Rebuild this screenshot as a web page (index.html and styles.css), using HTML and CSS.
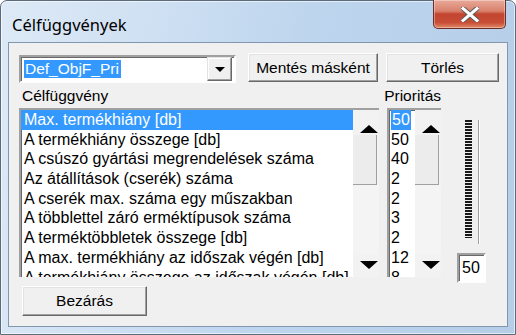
FILE: index.html
```html
<!DOCTYPE html>
<html lang="hu">

<head>
    <meta charset="UTF-8">
    <title>Célfüggvények</title>
    <link rel="stylesheet" href="styles.css">
</head>

<body>
    <div class="window">
        <div class="titlebar">
            <span class="title">Célfüggvények</span>
            <button class="close-btn" type="button" aria-label="Bezárás">
                <svg width="18" height="15" viewBox="0 0 18 15">
                    <path d="M2 1.5 L16 13.5 M16 1.5 L2 13.5" stroke="#5a5a5a" stroke-width="5" stroke-linecap="square" fill="none" />
                    <path d="M2 1.5 L16 13.5 M16 1.5 L2 13.5" stroke="#fff" stroke-width="3" stroke-linecap="square" fill="none" />
                </svg>
            </button>
        </div>

        <div class="client">
            <!-- felso sor: kombo + gombok -->
            <div class="top-row">
                <div class="combo">
                    <span class="combo-text">Def_ObjF_Pri</span>
                    <span class="combo-btn"><span class="tri-down small"></span></span>
                </div>
                <button class="btn btn-save" type="button">Mentés másként</button>
                <button class="btn btn-delete" type="button">Törlés</button>
            </div>

            <div class="label-row">
                <span class="lbl lbl-func">Célfüggvény</span>
                <span class="lbl lbl-prio">Prioritás</span>
            </div>

            <div class="list-row">
                <div class="listbox list-func">
                    <ul class="items">
                        <li class="selected">Max. termékhiány [db]</li>
                        <li>A termékhiány összege [db]</li>
                        <li>A csúszó gyártási megrendelések száma</li>
                        <li>Az átállítások (cserék) száma</li>
                        <li>A cserék max. száma egy műszakban</li>
                        <li>A többlettel záró erméktípusok száma</li>
                        <li>A terméktöbbletek összege [db]</li>
                        <li>A max. termékhiány az időszak végén [db]</li>
                        <li>A termékhiány összege az időszak végén [db]</li>
                    </ul>
                    <div class="scrollbar">
                        <span class="arrow-box"><span class="tri-up"></span></span>
                        <span class="thumb"></span>
                        <span class="track"></span>
                        <span class="arrow-box"><span class="tri-down"></span></span>
                    </div>
                </div>

                <div class="listbox list-prio">
                    <ul class="items">
                        <li class="selected"><span>50</span></li>
                        <li>50</li>
                        <li>40</li>
                        <li>2</li>
                        <li>2</li>
                        <li>3</li>
                        <li>2</li>
                        <li>12</li>
                        <li>8</li>
                    </ul>
                    <div class="scrollbar">
                        <span class="arrow-box"><span class="tri-up"></span></span>
                        <span class="thumb"></span>
                        <span class="track"></span>
                        <span class="arrow-box"><span class="tri-down"></span></span>
                    </div>
                </div>

                <div class="slider-col">
                    <div class="slider">
                        <span class="ticks"></span>
                        <span class="channel"></span>
                    </div>
                    <div class="edit">50</div>
                </div>
            </div>

            <div class="bottom-row">
                <button class="btn btn-close" type="button">Bezárás</button>
            </div>
        </div>
    </div>
</body>

</html>
```

FILE: styles.css
```css
* {
    margin: 0;
    padding: 0;
    box-sizing: border-box;
}

body {
    width: 516px;
    height: 335px;
    overflow: hidden;
    background: #fff;
    font-family: 'Liberation Sans', Arial, sans-serif;
}

/* Ablak keret (Windows 7 stilus) */
.window {
    width: 516px;
    height: 335px;
    border: 1px solid #5b6b7c;
    border-radius: 7px 7px 0 0;
    background: linear-gradient(100deg, #dde9f6 0%, #d0e1f3 25%, #bdd5ed 55%, #b5cde7 100%);
    box-shadow: inset 0 0 0 1px rgba(255, 255, 255, 0.6);
    display: flex;
    flex-direction: column;
}

.titlebar {
    height: 41px;
    display: flex;
    justify-content: space-between;
    align-items: flex-start;
}

.title {
    font-family: 'Noto Sans', 'Open Sans', sans-serif;
    font-size: 16.5px;
    color: #000;
    margin: 14px 0 0 11px;
    line-height: 20px;
}

.close-btn {
    width: 73px;
    height: 29px;
    margin: -1px 9px 0 0;
    border: 1px solid #6a2f28;
    border-top: none;
    border-radius: 0 0 5px 5px;
    background: linear-gradient(to bottom, #e9a999 0%, #d8806c 40%, #c2452f 50%, #c84d36 80%, #df8a66 100%);
    box-shadow: inset 0 0 0 1px rgba(255, 255, 255, 0.35);
    display: flex;
    justify-content: center;
    align-items: center;
}

.client {
    flex: 1;
    margin: 0 7px 7px 7px;
    border: 1px solid #8197b0;
    background: #f0f0f0;
    padding: 10px 0 0 10px;
    font-size: 15.5px;
    color: #000;
}

/* felso sor */
.top-row {
    display: flex;
    align-items: flex-start;
    height: 29px;
}

.combo {
    width: 217px;
    height: 28px;
    margin-top: 2px;
    background: #fff;
    border: 2px solid;
    border-color: #a0a0a0 #fff #fff #a0a0a0;
    box-shadow: inset 1px 1px #696969;
    display: flex;
    align-items: center;
    padding: 0 2px 0 3px;
}

.combo-text {
    background: #3399ff;
    color: #fff;
    padding: 0 1px;
    line-height: 18px;
    flex: 1;
    max-width: 97px;
}

.combo-btn {
    margin-left: auto;
    width: 25px;
    height: 24px;
    background: #f0f0f0;
    border: 1px solid;
    border-color: #e3e3e3 #696969 #696969 #e3e3e3;
    box-shadow: inset -1px -1px #a0a0a0, inset 1px 1px #fff;
    display: flex;
    justify-content: center;
    align-items: center;
}

.btn {
    font-family: 'Liberation Sans', Arial, sans-serif;
    font-size: 15.5px;
    color: #000;
    background: #f0f0f0;
    border: 1px solid;
    border-color: #fff #696969 #696969 #fff;
    box-shadow: inset -1px -1px #a0a0a0, inset 1px 1px #e3e3e3;
}

.btn-save {
    width: 130px;
    height: 29px;
    margin-left: 12px;
}

.btn-delete {
    width: 113px;
    height: 29px;
    margin-left: 8px;
}

.label-row {
    display: flex;
    height: 26px;
    padding-top: 5px;
    line-height: 18px;
}

.lbl-func {
    margin-left: 3px;
}

.lbl-prio {
    margin-left: 276px;
}

/* listak */
.list-row {
    display: flex;
    align-items: flex-start;
    height: 178px;
}

.listbox {
    height: 169px;
    background: #fff;
    border-top: 2px solid #a0a0a0;
    border-left: 2px solid #a0a0a0;
    box-shadow: inset 1px 1px #696969;
    display: flex;
    overflow: hidden;
}

.items {
    list-style: none;
    flex: 1;
    overflow: hidden;
    white-space: nowrap;
    font-size: 16px;
}

.items li {
    height: 19.7px;
    line-height: 19.7px;
    padding-left: 3px;
}

.list-func {
    width: 360px;
}

.list-func .items li.selected {
    background: #3399ff;
    color: #fff;
}

.list-prio {
    width: 54px;
    margin-left: 8px;
}

.list-prio .items li {
    padding-left: 2px;
}

.list-prio .items li.selected span {
    background: #3399ff;
    color: #fff;
    padding: 0 1px;
    display: inline-block;
}

.scrollbar {
    width: 26px;
    background: #f2f2f2;
    display: flex;
    flex-direction: column;
}

.arrow-box {
    height: 25px;
    display: flex;
    align-items: flex-end;
    justify-content: center;
    padding: 0 0 2px 6px;
}

.arrow-box:last-child {
    align-items: center;
    height: 22px;
}

.thumb {
    height: 50px;
    border-right: 1px solid #a0a0a0;
    border-bottom: 1px solid #a0a0a0;
    background: #ececec;
    margin-right: 2px;
}

.track {
    flex: 1;
    background: #f4f4f4;
}

.tri-up {
    width: 0;
    height: 0;
    border-left: 9px solid transparent;
    border-right: 9px solid transparent;
    border-bottom: 8px solid #000;
}

.tri-down {
    width: 0;
    height: 0;
    border-left: 9px solid transparent;
    border-right: 9px solid transparent;
    border-top: 8px solid #000;
}

.tri-down.small {
    border-left-width: 5px;
    border-right-width: 5px;
    border-top-width: 5px;
}

/* csuszka es szerkeszto mezo */
.slider-col {
    width: 30px;
    margin-left: 16px;
    display: flex;
    flex-direction: column;
    align-items: flex-start;
}

.slider {
    height: 126px;
    margin: 10px 0 0 8px;
    display: flex;
    gap: 6px;
}

.ticks {
    width: 7px;
    height: 118px;
    margin-top: 2px;
    background: repeating-linear-gradient(to bottom, #1a1a1a 0 2px, transparent 2px 3px);
}

.channel {
    width: 2px;
    height: 124px;
    margin-top: 2px;
    border-left: 1px solid #a0a0a0;
    border-right: 1px solid #fff;
}

.edit {
    width: 29px;
    height: 30px;
    margin-top: 9px;
    background: #fff;
    border: 2px solid;
    border-color: #a0a0a0 #fff #fff #a0a0a0;
    box-shadow: inset 1px 1px #696969;
    padding-left: 3px;
    line-height: 26px;
    font-size: 16px;
}

.bottom-row {
    display: flex;
    padding-left: 3px;
}

.btn-close {
    width: 125px;
    height: 30px;
}
```
